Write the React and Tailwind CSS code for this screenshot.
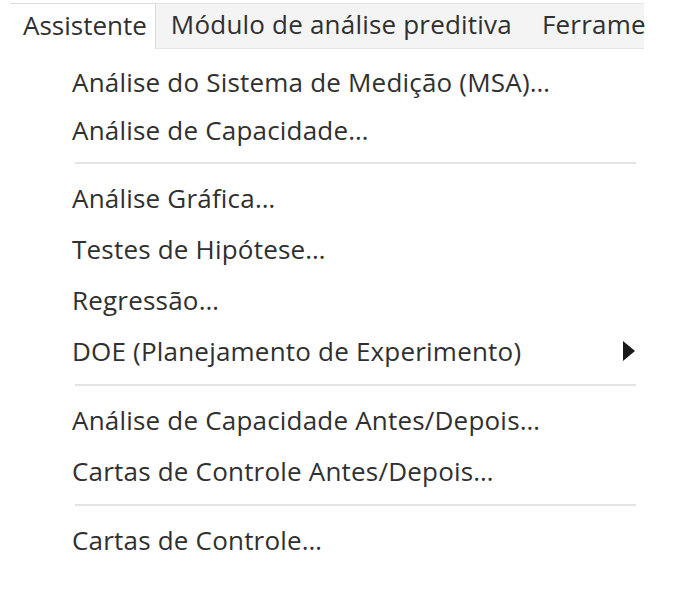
import React from "react";

const groups = [
  [
    { label: "Análise do Sistema de Medição (MSA)…", h: "h-[48px]" },
    { label: "Análise de Capacidade…", h: "h-[48px]" },
  ],
  [
    { label: "Análise Gráfica…" },
    { label: "Testes de Hipótese…" },
    { label: "Regressão…" },
    { label: "DOE (Planejamento de Experimento)", submenu: true },
  ],
  [
    { label: "Análise de Capacidade Antes/Depois…" },
    { label: "Cartas de Controle Antes/Depois…" },
  ],
  [{ label: "Cartas de Controle…" }],
];

const MenuItem = ({ item }) => (
  <div
    className={`${item.h || "h-[51px]"} flex items-center pl-[72px] w-[643px] relative`}
  >
    <span className="leading-none">{item.label}</span>
    {item.submenu && (
      <svg
        className="absolute left-[623px] top-1/2 -translate-y-1/2"
        width="12"
        height="20"
        viewBox="0 0 12 20"
      >
        <polygon points="0,0 12,10 0,20" fill="#1a1a1a" />
      </svg>
    )}
  </div>
);

const Separator = () => (
  <div className="h-[18px] flex items-center">
    <div className="ml-[75px] w-[561px] h-[2px] bg-[#e4e4e4]" />
  </div>
);

export default function App() {
  return (
    <div
      className="w-[700px] h-[609px] bg-white text-[#303030] text-[26px] tracking-[0.2px] overflow-hidden"
      style={{ fontFamily: '"Open Sans", "Noto Sans", sans-serif' }}
    >
      <div className="pt-[3px] flex">
        <div className="h-[46px] ml-[10px] pl-[13px] pr-[8px] flex items-center border-t border-r border-[#dcdcdc] bg-white">
          <span className="-mt-[3px] tracking-normal">Assistente</span>
        </div>
        <div className="h-[46px] w-[488px] flex items-center bg-[#f4f4f4] border-t border-b border-[#e6e6e6] whitespace-nowrap">
          <span className="-mt-[3px] pl-[15px]">Módulo de análise preditiva</span>
          <span className="-mt-[3px] pl-[30px]">Ferrame</span>
        </div>
      </div>
      <div className="pt-[9px]">
        {groups.map((group, gi) => (
          <div key={gi}>
            {gi > 0 && <Separator />}
            {group.map((item) => (
              <MenuItem key={item.label} item={item} />
            ))}
          </div>
        ))}
      </div>
    </div>
  );
}
